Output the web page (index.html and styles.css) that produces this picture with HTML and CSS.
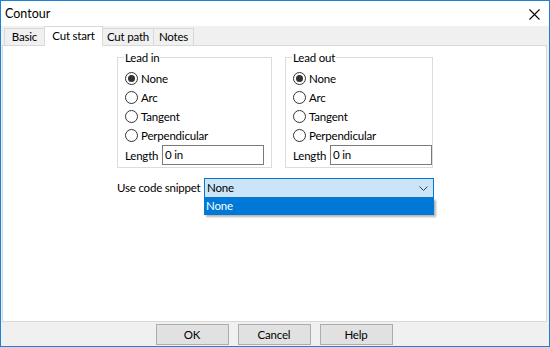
FILE: index.html
```html
<!DOCTYPE html>
<html>
<head>
<meta charset="utf-8">
<link rel="stylesheet" href="styles.css">
</head>
<body>
<div class="window">
  <div class="titlebar">
    <span class="title">Contour</span>
    <svg class="close" width="11" height="11" viewBox="0 0 11 11"><path d="M0.5 0.5 L10.5 10.5 M10.5 0.5 L0.5 10.5" stroke="#000" stroke-width="1.1" fill="none"/></svg>
  </div>
  <div class="body">
    <div class="tabs">
      <div class="tab t-basic">Basic</div>
      <div class="tab active t-cut">Cut start</div>
      <div class="tab t-path">Cut path</div>
      <div class="tab t-notes">Notes</div>
    </div>
    <div class="panel">
      <div class="groups">
        <fieldset class="group g-in">
          <legend>Lead in</legend>
          <div class="radio"><span class="dot on"></span>None</div>
          <div class="radio"><span class="dot"></span>Arc</div>
          <div class="radio"><span class="dot"></span>Tangent</div>
          <div class="radio"><span class="dot"></span>Perpendicular</div>
          <div class="lenrow"><span class="lenlabel">Length</span><div class="input">0 in</div></div>
        </fieldset>
        <fieldset class="group g-out">
          <legend>Lead out</legend>
          <div class="radio"><span class="dot on"></span>None</div>
          <div class="radio"><span class="dot"></span>Arc</div>
          <div class="radio"><span class="dot"></span>Tangent</div>
          <div class="radio"><span class="dot"></span>Perpendicular</div>
          <div class="lenrow"><span class="lenlabel">Length</span><div class="input">0 in</div></div>
        </fieldset>
      </div>
      <div class="snippet">
        <span class="snlabel">Use code snippet</span>
        <div class="combowrap">
          <div class="combo">
            <span>None</span>
            <svg class="chev" width="9" height="5" viewBox="0 0 9 5"><path d="M0.5 0.5 L4.5 4.5 L8.5 0.5" stroke="#404040" stroke-width="1" fill="none"/></svg>
          </div>
          <div class="droplist">None</div>
        </div>
      </div>
    </div>
    <div class="buttons">
      <div class="btn">OK</div>
      <div class="btn">Cancel</div>
      <div class="btn">Help</div>
    </div>
  </div>
</div>
</body>
</html>
```
FILE: styles.css
```css
* { box-sizing: border-box; }
html, body { margin: 0; padding: 0; background: #fff; }
body {
  font-family: "Lato", "Noto Sans", sans-serif;
  font-size: 11.5px;
  letter-spacing: -0.2px;
  color: #000;
  white-space: nowrap;
}
.window {
  width: 550px;
  height: 347px;
  border: 1px solid #1883d7;
  display: flex;
  flex-direction: column;
  background: #f0f0f0;
}
.titlebar {
  height: 25px;
  background: #fff;
  display: flex;
  align-items: center;
  padding-left: 4px;
  padding-right: 9px;
  justify-content: space-between;
  flex: none;
}
.title { font-size: 12.5px; line-height: 16px; letter-spacing: 0; }
.close { display: block; margin-top: 1px; }
.body {
  flex: 1;
  display: flex;
  flex-direction: column;
  padding: 0 2px 0 1px;
}
.tabs {
  height: 19px;
  display: flex;
  align-items: flex-end;
  padding-left: 2px;
  position: relative;
  z-index: 2;
}
.tab {
  height: 17px;
  border: 1px solid #d9d9d9;
  border-bottom: none;
  background: #f0f0f0;
  display: flex;
  align-items: center;
  justify-content: center;
  line-height: 14px;
}
.t-basic { width: 40px; border-right: none; }
.t-cut { width: 59px; }
.t-path { width: 51px; border-left: none; }
.t-notes { width: 40px; border-left: none; }
.tab.active {
  height: 20px;
  background: #fff;
  margin-bottom: -1px;
  align-items: flex-start;
  padding-top: 2px;
}
.panel {
  height: 277px;
  background: #fff;
  border: 1px solid #d9d9d9;
  display: flex;
  flex-direction: column;
  padding-left: 114px;
  flex: none;
}
.groups {
  display: flex;
  gap: 13px;
  margin-top: 4px;
}
.group {
  margin: 0;
  border: 1px solid #dcdcdc;
  padding: 4px 0 2px 7px;
  min-width: 0;
}
.g-in { width: 155px; }
.g-out { width: 148px; }
legend {
  padding: 0 1px;
  margin-left: -1px;
  line-height: 15px;
  color: #000;
}
.radio {
  height: 19px;
  display: flex;
  align-items: center;
  line-height: 15px;
}
.dot {
  width: 13px;
  height: 13px;
  border: 1px solid #333;
  border-radius: 50%;
  margin-right: 3px;
  display: flex;
  align-items: center;
  justify-content: center;
  flex: none;
}
.dot.on::after {
  content: "";
  width: 7px;
  height: 7px;
  border-radius: 50%;
  background: #333;
}
.lenrow {
  display: flex;
  align-items: center;
  height: 20px;
}
.lenlabel { width: 37px; }
.input {
  width: 102px;
  height: 20px;
  border: 1px solid #7a7a7a;
  padding-left: 2px;
  line-height: 17px;
}
.snippet {
  display: flex;
  align-items: flex-start;
  margin-top: 10px;
}
.snlabel {
  line-height: 20px;
  width: 87px;
}
.combowrap {
  width: 230px;
}
.combo {
  height: 20px;
  border: 1px solid #0078d7;
  background: #cce4f7;
  display: flex;
  align-items: center;
  justify-content: space-between;
  padding: 0 5px 0 2px;
  line-height: 16px;
}
.chev { display: block; }
.droplist {
  height: 17px;
  background: #0078d7;
  color: #fff;
  padding-left: 2px;
  line-height: 16px;
  box-shadow: 2px 2px 2px rgba(0,0,0,0.3);
}
.buttons {
  flex: 1;
  display: flex;
  justify-content: center;
  gap: 9px;
  padding-top: 2px;
  padding-right: 1px;
}
.btn {
  width: 73px;
  height: 21px;
  border: 1px solid #adadad;
  background: #e1e1e1;
  display: flex;
  align-items: center;
  justify-content: center;
  line-height: 15px;
}
```
